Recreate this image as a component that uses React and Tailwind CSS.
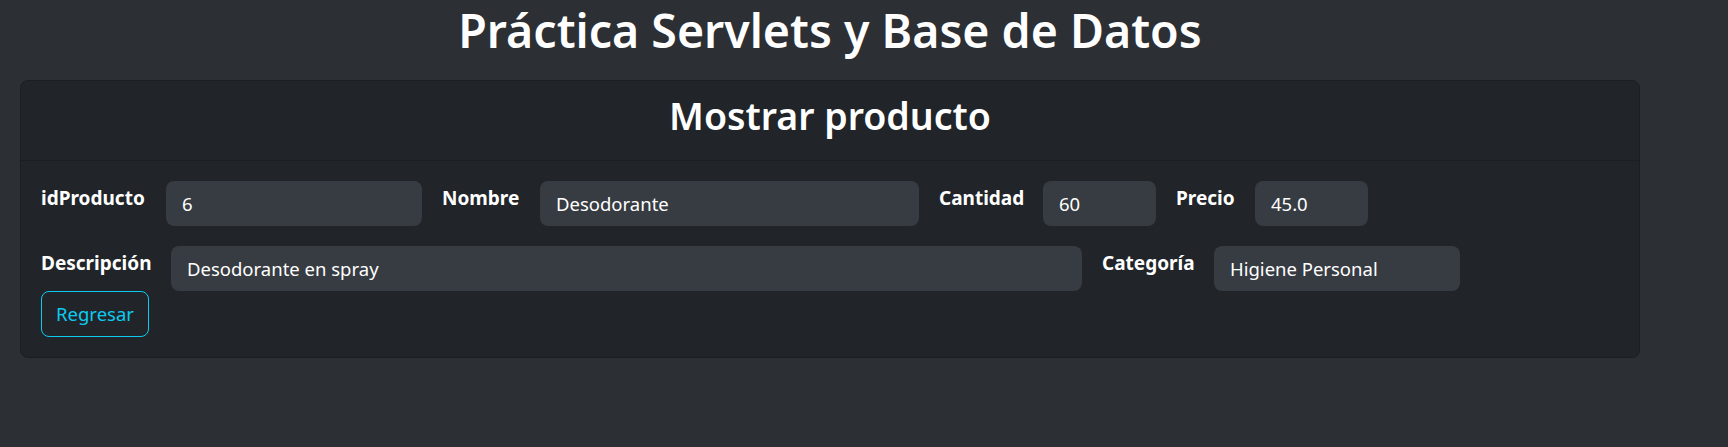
import React from 'react';

const row1 = [
  { label: 'idProducto', value: '6', labelW: 'w-[105px]', inputW: 'w-[256px]' },
  { label: 'Nombre', value: 'Desodorante', labelW: 'w-[78px]', inputW: 'w-[379px]' },
  { label: 'Cantidad', value: '60', labelW: 'w-[84px]', inputW: 'w-[113px]' },
  { label: 'Precio', value: '45.0', labelW: 'w-[59px]', inputW: 'w-[113px]' },
];

const row2 = [
  { label: 'Descripción', value: 'Desodorante en spray', labelW: 'w-[110px]', inputW: 'w-[911px]' },
  { label: 'Categoría', value: 'Higiene Personal', labelW: 'w-[92px]', inputW: 'w-[246px]' },
];

const Field = ({ label, value, labelW, inputW }) => (
  <>
    <label className={`${labelW} whitespace-nowrap text-[19px] font-bold leading-[34px]`}>{label}</label>
    <input
      readOnly
      value={value}
      className={`${inputW} h-[45px] rounded-lg bg-[#373b42] px-4 text-[18.5px] text-white outline-none`}
    />
  </>
);

const App = () => {
  return (
    <div className="min-h-screen bg-[#2c2f34] font-['Segoe_UI','Noto_Sans',sans-serif] text-white">
      <div className="w-[1660px] px-5">
        <h1 className="mb-5 text-center text-[46.5px] font-semibold leading-[60px]">
          Práctica Servlets y Base de Datos
        </h1>

        <div className="rounded-lg border border-[#1b1e22] bg-[#212529]">
          <div className="h-[80px] border-b border-[#1b1e22] pt-[11px] text-center">
            <h2 className="text-[37.5px] font-semibold leading-[48px]">Mostrar producto</h2>
          </div>

          <div className="flex flex-col items-start p-5">
            <div className="flex items-start gap-5">
              {row1.map((f) => (
                <Field key={f.label} {...f} />
              ))}
            </div>
            <div className="mt-5 flex items-start gap-5">
              {row2.map((f) => (
                <Field key={f.label} {...f} />
              ))}
            </div>
            <button className="h-[46px] w-[108px] rounded-lg border border-[#0dcaf0] text-[18.5px] text-[#0dcaf0]">
              Regresar
            </button>
          </div>
        </div>
      </div>
    </div>
  );
};

export default App;
